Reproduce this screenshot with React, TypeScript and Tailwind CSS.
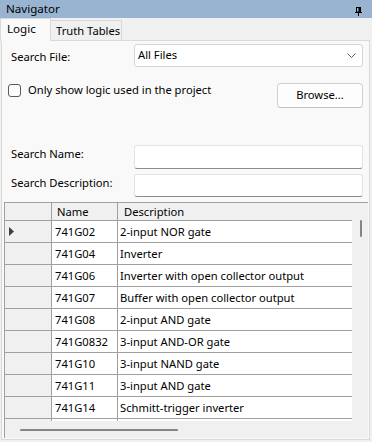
import React from "react";

const rows: [string, string][] = [
  ["741G02", "2-input NOR gate"],
  ["741G04", "Inverter"],
  ["741G06", "Inverter with open collector output"],
  ["741G07", "Buffer with open collector output"],
  ["741G08", "2-input AND gate"],
  ["741G0832", "3-input AND-OR gate"],
  ["741G10", "3-input NAND gate"],
  ["741G11", "3-input AND gate"],
  ["741G14", "Schmitt-trigger inverter"],
];

function Pin() {
  return (
    <svg width="7" height="9" viewBox="0 0 7 9" className="block mt-[4px]">
      <rect x="1.5" y="0.5" width="4" height="4.5" fill="none" stroke="#000" />
      <rect x="3.5" y="1" width="1.5" height="4" fill="#000" />
      <rect x="0" y="5" width="7" height="1" fill="#000" />
      <rect x="3" y="6" width="1" height="3" fill="#000" />
    </svg>
  );
}

export default function App() {
  return (
    <div
      className="w-[372px] h-[442px] bg-[#f0f0f0] flex flex-col overflow-hidden text-[11.2px] text-black"
      style={{ fontFamily: '"Noto Sans", "Open Sans", sans-serif' }}
    >
      {/* title bar */}
      <div className="h-[18px] bg-[#99b4d1] flex items-center justify-between pl-[6px] pr-[10px] shrink-0">
        <span className="leading-none text-[11.6px]">Navigator</span>
        <Pin />
      </div>
      {/* tabs */}
      <div className="h-[22px] flex items-end shrink-0 relative z-10">
        <div className="h-[23px] w-[51px] bg-[#f9f9f9] border border-b-0 border-[#d9d9d9] flex items-center pl-[6px] -mb-[1px]">
          <span className="text-[11.6px] leading-none -mt-[2px]">Logic</span>
        </div>
        <div className="h-[20px] w-[71px] bg-[#f0f0f0] border border-l-0 border-b-0 border-[#d9d9d9] flex items-center pl-[5px]">
          <span className="leading-none whitespace-nowrap">Truth Tables</span>
        </div>
      </div>
      {/* tab page */}
      <div className="ml-[1px] w-[369px] h-[400px] bg-[#f9f9f9] border border-[#d9d9d9] flex flex-col shrink-0">
        <div className="flex items-center mt-[3px] h-[23px]">
          <span className="ml-[9px] w-[123px] mt-[4px]">Search File:</span>
          <div className="w-[229px] h-[23px] bg-white border border-[#d5d5d5] rounded-[3px] flex items-center justify-between pl-[3px] pr-[6px]">
            <span>All Files</span>
            <svg width="9" height="6" viewBox="0 0 9 6">
              <path d="M0.5 0.5 L4.5 4.5 L8.5 0.5" fill="none" stroke="#606060" strokeWidth="1" />
            </svg>
          </div>
        </div>
        <div className="flex items-start mt-[16px] h-[25px]">
          <div className="ml-[6px] mt-[1px] w-[13px] h-[13px] border border-[#5a5a5a] rounded-[3px] bg-[#fbfbfb]" />
          <span className="ml-[7px] -mt-[1px] whitespace-nowrap">Only show logic used in the project</span>
          <div className="ml-auto mr-[6px] w-[86px] h-[25px] bg-[#fdfdfd] border border-[#d0d0d0] border-b-[#c0c0c0] rounded-[4px] flex items-center justify-center">
            <span className="-mt-[1px]">Browse...</span>
          </div>
        </div>
        <div className="flex items-center mt-[37px] h-[24px]">
          <span className="ml-[9px] w-[123px] -mt-[6px]">Search Name:</span>
          <div className="w-[229px] h-[24px] bg-white border border-[#e3e3e3] border-b-[#8c8c8c] rounded-[3px]" />
        </div>
        <div className="flex items-center mt-[5px] h-[23px]">
          <span className="ml-[9px] w-[123px] -mt-[5px]">Search Description:</span>
          <div className="w-[229px] h-[23px] bg-white border border-[#e3e3e3] border-b-[#8c8c8c] rounded-[3px]" />
        </div>
        {/* grid */}
        <div className="ml-[2px] mt-[5px] w-[364px] h-[236px] border-l border-t border-[#a0a0a0] flex flex-col bg-[#f0f0f0]">
          <div className="flex h-[218px] overflow-hidden shrink-0">
            <div className="w-[347px] flex flex-col overflow-hidden">
              {/* header */}
              <div className="flex h-[18px] shrink-0 border-b border-[#a0a0a0] bg-[#f0f0f0]">
                <div className="w-[47px] border-r border-[#a0a0a0]" />
                <div className="w-[66px] border-r border-[#a0a0a0] pl-[5px] leading-[17px]">Name</div>
                <div className="flex-1 pl-[6px] leading-[17px]">Description</div>
              </div>
              {rows.map(([n, d], i) => (
                <div key={n} className="flex h-[22px] shrink-0 border-b border-[#a0a0a0]">
                  <div className="w-[47px] border-r border-[#a0a0a0] bg-[#f0f0f0] flex items-center pl-[4px]">
                    {i === 0 && (
                      <svg width="5" height="9" viewBox="0 0 5 9">
                        <path d="M0 0 L5 4.5 L0 9 Z" fill="#404040" />
                      </svg>
                    )}
                  </div>
                  <div className="w-[66px] border-r border-[#a0a0a0] bg-white pl-[3px] leading-[21px] whitespace-nowrap overflow-hidden">{n}</div>
                  <div className="flex-1 bg-white pl-[2px] leading-[21px] whitespace-nowrap overflow-hidden">{d}</div>
                </div>
              ))}
              {/* partially visible next row */}
              <div className="flex h-[22px] shrink-0">
                <div className="w-[47px] border-r border-[#a0a0a0] bg-[#f0f0f0]" />
                <div className="w-[66px] border-r border-[#a0a0a0] bg-white" />
                <div className="flex-1 bg-white" />
              </div>
            </div>
            {/* vertical scrollbar */}
            <div className="w-[16px] bg-[#f0f0f0] flex justify-center pt-[17px] pl-[1px]">
              <div className="w-[2px] h-[17px] bg-[#858585] rounded-full" />
            </div>
          </div>
          {/* horizontal scrollbar */}
          <div className="h-[17px] bg-[#f0f0f0] flex items-center pl-[15px] shrink-0">
            <div className="w-[158px] h-[2px] bg-[#858585] rounded-full mt-[1px]" />
          </div>
        </div>
      </div>
    </div>
  );
}
